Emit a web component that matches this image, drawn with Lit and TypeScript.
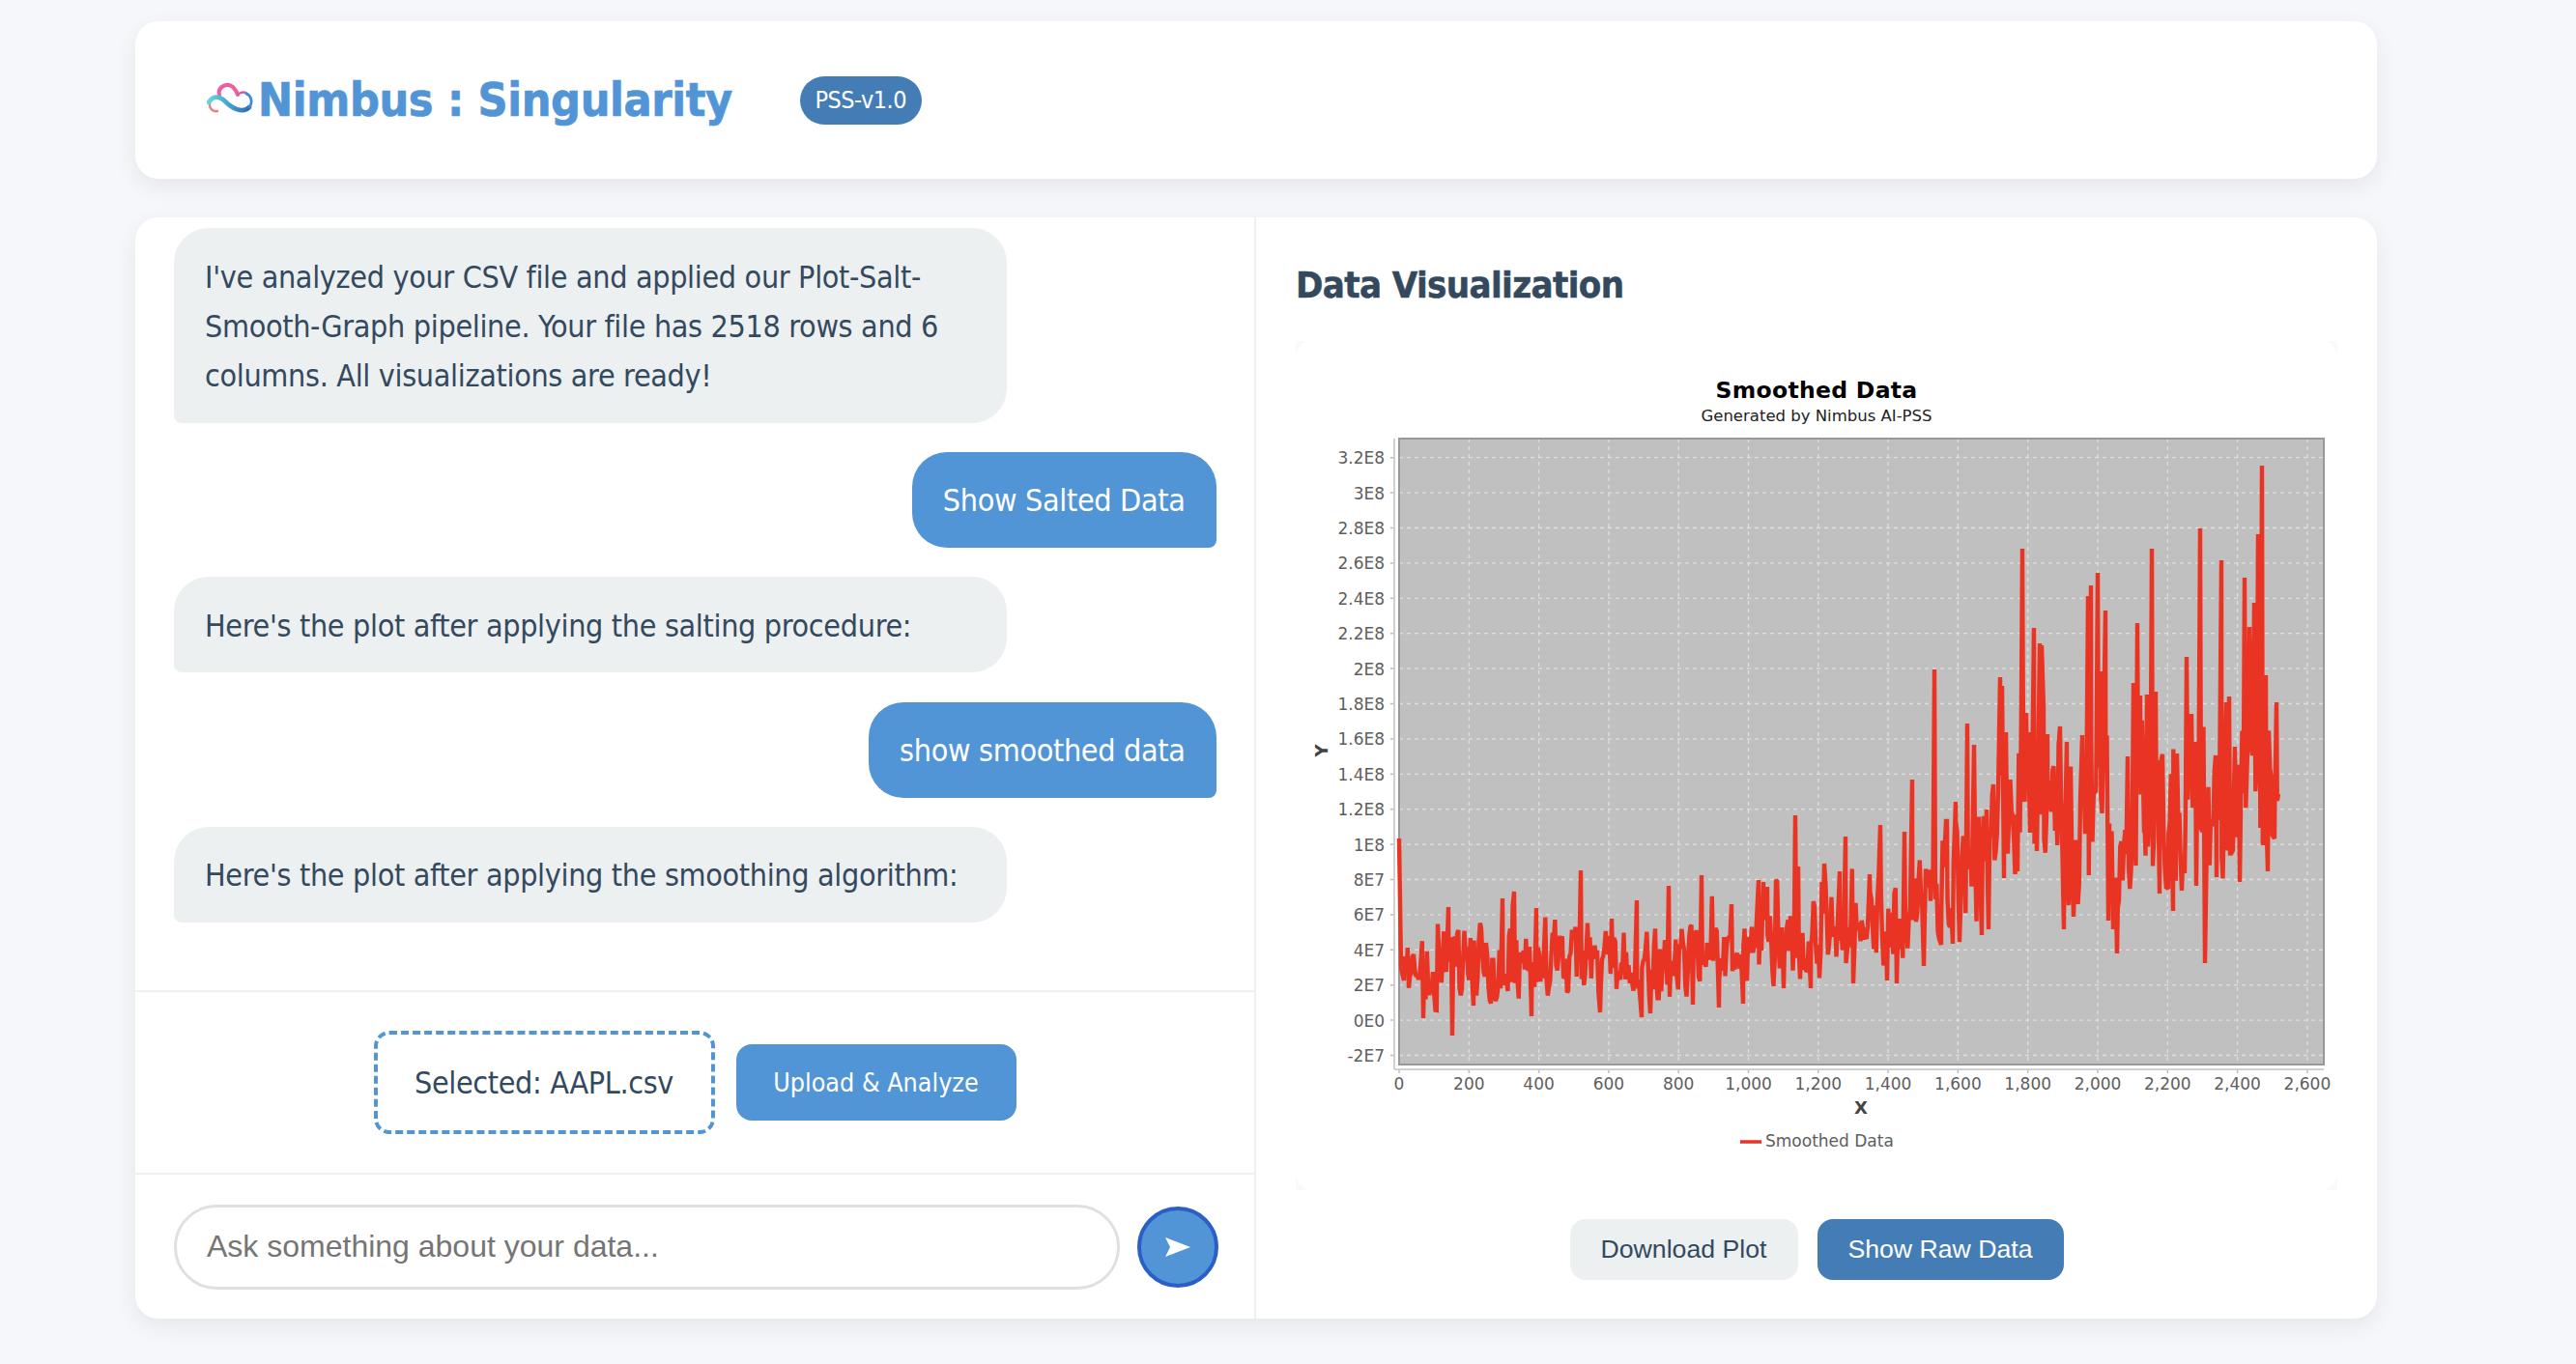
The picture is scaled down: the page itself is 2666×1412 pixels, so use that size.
import { html, svg, css, LitElement } from "lit";
import { customElement } from "lit/decorators.js";

type Pt = [number, number];

// chart coordinates are page pixels, the group is shifted by the frame origin
const PLOT = { left: 1448, top: 454, right: 2405, bottom: 1102 };
const yOf = (step: number) => 473.7 + step * 36.4;
const xOf = (v: number) => 1448 + v * 0.3615;

const Y_LABELS = ["3.2E8", "3E8", "2.8E8", "2.6E8", "2.4E8", "2.2E8", "2E8", "1.8E8", "1.6E8", "1.4E8", "1.2E8", "1E8", "8E7", "6E7", "4E7", "2E7", "0E0", "-2E7"];
const X_VALUES = [0, 200, 400, 600, 800, 1000, 1200, 1400, 1600, 1800, 2000, 2200, 2400, 2600];

const ANCHORS: Pt[] = [
  [1448, 868], [1450, 1000], [1473, 1054], [1499, 939], [1503, 1072], [1525, 1041], [1555, 930], [1567, 923], [1585, 1052], [1590, 940],
  [1636, 901], [1656, 1048], [1668, 951], [1694, 932], [1699, 1053], [1708, 1049], [1727, 917], [1752, 1040], [1761, 906], [1779, 1043],
  [1792, 936], [1804, 1039], [1820, 911], [1825, 913], [1829, 918], [1846, 1023], [1858, 844], [1861, 897], [1874, 1023], [1888, 894],
  [1904, 902], [1910, 866], [1918, 1018], [1935, 905], [1946, 854], [1953, 1015], [1963, 1018], [1971, 861], [1979, 807], [1991, 1000],
  [2002, 693], [2009, 978], [2014, 850], [2015, 850], [2021, 977], [2024, 830], [2036, 749], [2043, 771], [2051, 968], [2056, 838],
  [2058, 962], [2070, 701], [2072, 710], [2074, 909], [2076, 758], [2088, 902], [2093, 568], [2097, 738], [2101, 862], [2105, 650],
  [2108, 881], [2111, 666], [2113, 668], [2115, 733], [2118, 845], [2119, 760], [2132, 752], [2136, 962], [2139, 768], [2141, 937],
  [2146, 949], [2155, 761], [2161, 617], [2164, 606], [2169, 819], [2171, 593], [2174, 695], [2179, 632], [2182, 953], [2187, 962],
  [2191, 987], [2202, 783], [2203, 898], [2208, 707], [2212, 645], [2215, 720], [2219, 862], [2222, 719], [2225, 833], [2227, 568],
  [2231, 716], [2235, 925], [2244, 920], [2249, 943], [2253, 780], [2261, 904], [2263, 680], [2268, 739], [2272, 768], [2273, 917],
  [2277, 547], [2282, 997], [2293, 782], [2294, 908], [2299, 580], [2304, 727], [2307, 721], [2311, 880], [2313, 773], [2318, 913],
  [2323, 598], [2326, 778], [2328, 649], [2331, 782], [2333, 624], [2337, 553], [2339, 723], [2341, 482], [2345, 699], [2347, 902],
  [2354, 868], [2356, 727], [2358, 822],
];

// x, top of the dense band, bottom of the dense band
const BAND: [number, number, number][] = [
  [1448, 975, 1030], [1500, 970, 1035], [1570, 960, 1025], [1640, 975, 1030], [1700, 975, 1030], [1760, 965, 1025], [1800, 960, 1020],
  [1850, 945, 1010], [1900, 935, 1005], [1960, 915, 990], [2000, 890, 970], [2040, 850, 960], [2060, 830, 930], [2090, 780, 880],
  [2125, 780, 860], [2150, 810, 930], [2175, 760, 900], [2195, 870, 970], [2215, 760, 860], [2240, 800, 915], [2265, 780, 900],
  [2285, 790, 930], [2305, 800, 880], [2330, 730, 840], [2358, 760, 880],
];

function bandAt(x: number): [number, number] {
  for (let i = 1; i < BAND.length; i++) {
    if (x <= BAND[i][0]) {
      const a = BAND[i - 1];
      const b = BAND[i];
      const t = (x - a[0]) / (b[0] - a[0]);
      return [a[1] + (b[1] - a[1]) * t, a[2] + (b[2] - a[2]) * t];
    }
  }
  return [760, 880];
}

function buildSeries(): string {
  let seed = 20240611;
  const rand = () => {
    seed = (seed * 1664525 + 1013904223) >>> 0;
    return seed / 4294967296;
  };
  const pts: Pt[] = [];
  let a = 0;
  let walk = 0;
  const step = 1.25;
  for (let x = 1448; x < 2358; x += step) {
    const hits: Pt[] = [];
    while (a < ANCHORS.length && ANCHORS[a][0] < x + step) hits.push(ANCHORS[a++]);
    if (hits.length) {
      pts.push(...hits);
    } else {
      const [top, bottom] = bandAt(x);
      // mean reverting walk, so the line swings instead of filling the band solid
      walk = 0.35 * walk + (rand() - 0.5) * 1.9;
      let y = (top + bottom) / 2 + ((bottom - top) / 2) * walk * 1.2;
      if (rand() < 0.04) y = top - rand() * 38;
      pts.push([x, Math.min(y, bottom + 18)]);
    }
  }
  while (a < ANCHORS.length) pts.push(ANCHORS[a++]);
  return pts.map((p) => `${p[0].toFixed(1)},${p[1].toFixed(1)}`).join(" ");
}

const SERIES = buildSeries();

const MESSAGES = [
  { from: "bot", text: "I've analyzed your CSV file and applied our Plot-Salt-Smooth-Graph pipeline. Your file has 2518 rows and 6 columns. All visualizations are ready!" },
  { from: "user", text: "Show Salted Data" },
  { from: "bot", text: "Here's the plot after applying the salting procedure:" },
  { from: "user", text: "show smoothed data" },
  { from: "bot", text: "Here's the plot after applying the smoothing algorithm:" },
];

@customElement("app-root")
export class AppRoot extends LitElement {
  static styles = css`
    :host {
      display: block;
      min-height: 1412px;
      background: #f5f7fa;
      font-family: "DejaVu Sans Condensed", "DejaVu Sans", sans-serif;
      font-stretch: condensed;
      color: #34495e;
    }

    .page {
      width: 2320px;
      margin-left: 140px;
      padding: 22px 0 47px;
      display: flex;
      flex-direction: column;
      gap: 40px;
    }

    .card {
      background: #fff;
      border-radius: 24px;
      box-shadow: 0 8px 24px rgba(0, 0, 0, 0.07);
    }

    .header {
      height: 163px;
      display: flex;
      align-items: center;
      padding-left: 74px;
      box-sizing: border-box;
    }

    .logo {
      width: 52px;
      height: 38px;
      flex: none;
    }

    h1 {
      margin: 0 70px 0 1px;
      font-size: 48px;
      font-weight: 700;
      color: #5295d6;
      line-height: 1.2;
      letter-spacing: -0.35px;
      -webkit-text-stroke: 0.7px #5295d6;
    }

    .badge {
      width: 126px;
      height: 50px;
      border-radius: 25px;
      background: #447db5;
      color: #fff;
      font-size: 25px;
      letter-spacing: -0.5px;
      display: flex;
      align-items: center;
      justify-content: center;
    }

    .main {
      height: 1140px;
      display: grid;
      grid-template-columns: 1160px 1160px;
      overflow: hidden;
    }

    .left {
      display: flex;
      flex-direction: column;
      border-right: 2px solid #f0f0f0;
      min-height: 0;
    }

    .messages {
      flex: 1;
      min-height: 0;
      overflow: hidden;
      padding: 11px 39.5px 0 40px;
      display: flex;
      flex-direction: column;
      gap: 30.2px;
    }

    .bubble {
      box-sizing: border-box;
      padding: 25.5px 32px 22.5px;
      font-size: 32px;
      line-height: 51.2px;
      letter-spacing: -0.33px;
      flex: none;
    }

    .bubble.bot {
      width: 862px;
      background: #ecf0f1;
      border-radius: 36px 36px 36px 8px;
    }

    .bubble.user {
      align-self: flex-end;
      background: #5295d6;
      color: #fff;
      border-radius: 36px 36px 8px 36px;
    }

    .upload {
      height: 187px;
      border-top: 2px solid #f0f0f0;
      border-bottom: 2px solid #f0f0f0;
      display: flex;
      align-items: center;
      justify-content: center;
      gap: 22px;
    }

    .file {
      box-sizing: border-box;
      width: 353px;
      height: 107px;
      border: 4px dashed #5295d6;
      border-radius: 16px;
      font-size: 32px;
      letter-spacing: -0.35px;
      display: flex;
      align-items: center;
      justify-content: center;
    }

    .upload-btn {
      width: 290px;
      height: 79px;
      border: none;
      border-radius: 16px;
      background: #5295d6;
      color: #fff;
      font: inherit;
      font-size: 26.67px;
    }

    .ask {
      flex: none;
      height: 149px;
      box-sizing: border-box;
      padding: 0 37px 0 40px;
      display: flex;
      align-items: center;
      gap: 18px;
    }

    .ask input {
      flex: 1;
      min-width: 0;
      height: 88px;
      box-sizing: border-box;
      border: 3px solid #e0e0e0;
      border-radius: 44px;
      padding: 0 31px;
      font-family: "Liberation Sans", Arial, sans-serif;
      font-size: 32px;
      outline: none;
    }

    .ask input::placeholder {
      color: #757575;
    }

    .send {
      flex: none;
      width: 84px;
      height: 84px;
      box-sizing: border-box;
      border: 4px solid #2a5fc8;
      border-radius: 50%;
      background: #5295d6;
      padding: 0;
      display: flex;
      align-items: center;
      justify-content: center;
    }

    .right {
      box-sizing: border-box;
      padding: 0 41px;
      display: flex;
      flex-direction: column;
    }

    h2 {
      margin: 0;
      height: 128px;
      display: flex;
      align-items: flex-end;
      padding-bottom: 34px;
      box-sizing: border-box;
      font-size: 38px;
      font-weight: 700;
      line-height: 48px;
      letter-spacing: -0.6px;
      -webkit-text-stroke: 0.5px #34495e;
    }

    .frame {
      width: 1078px;
      height: 879px;
      background: #f8f9f9;
    }

    .chart {
      display: block;
      width: 1078px;
      height: 879px;
      background: #fff;
      border-radius: 16px;
    }

    .chart text {
      font-family: "DejaVu Sans", sans-serif;
      font-stretch: normal;
    }

    .actions {
      margin-top: 30px;
      display: flex;
      justify-content: center;
      gap: 20px;
    }

    .actions button {
      height: 63px;
      border: none;
      border-radius: 16px;
      font-family: "Liberation Sans", Arial, sans-serif;
      font-size: 26.67px;
    }

    .download {
      width: 236px;
      background: #ecf0f1;
      color: #34495e;
    }

    .raw {
      width: 255px;
      background: #447db5;
      color: #fff;
    }
  `;

  private renderLogo() {
    return html`
      <svg class="logo" viewBox="0 0 52 38" fill="none" aria-hidden="true">
        <defs>
          <linearGradient id="ribbon" x1="0" y1="0" x2="1" y2="0">
            <stop offset="0" stop-color="#66d6d8" />
            <stop offset="0.55" stop-color="#3f9fcf" />
            <stop offset="1" stop-color="#2f68b4" />
          </linearGradient>
        </defs>
        <path d="M13 13C11 5 21 0 27 5C30 8 31 10 32 13" stroke="#ee5f9b" stroke-width="4" stroke-linecap="round" />
        <path d="M32 13C35 10 39 10 42 12" stroke="#d0629f" stroke-width="2.4" stroke-linecap="round" />
        <path d="M3 21C2 27 6 31 11 30" stroke="#f27a8c" stroke-width="2.4" stroke-linecap="round" />
        <path d="M2 21C6 14 13 14 19 20C26 27 37 33 44 26" stroke="url(#ribbon)" stroke-width="4.6" stroke-linecap="round" />
        <path d="M44 26C48 21 46 14 41 12" stroke="#3f8ed0" stroke-width="2.8" stroke-linecap="round" />
      </svg>
    `;
  }

  private renderChart() {
    const grid = "#dedede";
    const label = "#5e5e5e";
    return svg`
      <g transform="translate(-1341 -353)">
        <text x="1880" y="411.5" text-anchor="middle" font-size="23.5" font-weight="700" letter-spacing="0.3" fill="#000">Smoothed Data</text>
        <text x="1880" y="436" text-anchor="middle" font-size="16.5" fill="#222">Generated by Nimbus AI-PSS</text>

        <rect x=${PLOT.left} y=${PLOT.top} width=${PLOT.right - PLOT.left} height=${PLOT.bottom - PLOT.top} fill="#c0c0c0" />
        ${Y_LABELS.map((l, i) => svg`
          <line x1=${PLOT.left} x2=${PLOT.right} y1=${yOf(i)} y2=${yOf(i)} stroke=${grid} stroke-width="1.3" stroke-dasharray="4 4" />
          <line x1="1439" x2="1443" y1=${yOf(i)} y2=${yOf(i)} stroke="#bbb" stroke-width="1.5" />
          <text x="1433" y=${yOf(i) + 6.5} text-anchor="end" font-size="17" fill=${label}>${l}</text>
        `)}
        ${X_VALUES.map((v) => svg`
          <line x1=${xOf(v)} x2=${xOf(v)} y1=${PLOT.top} y2=${PLOT.bottom} stroke=${grid} stroke-width="1.3" stroke-dasharray="4 4" />
          <line x1=${xOf(v)} x2=${xOf(v)} y1="1107" y2="1111" stroke="#bbb" stroke-width="1.5" />
          <text x=${xOf(v)} y="1128" text-anchor="middle" font-size="17" fill=${label}>${v.toLocaleString("en-US")}</text>
        `)}
        <rect x=${PLOT.left} y=${PLOT.top} width=${PLOT.right - PLOT.left} height=${PLOT.bottom - PLOT.top} fill="none" stroke="#999" stroke-width="2" />
        <line x1="1443" x2="1443" y1="454" y2="1107" stroke="#d0d0d0" stroke-width="2" />
        <line x1="1443" x2="2405" y1="1107" y2="1107" stroke="#d0d0d0" stroke-width="2" />

        <polyline points=${SERIES} fill="none" stroke="#ea3423" stroke-width="4.4" stroke-linejoin="miter" stroke-miterlimit="2" />

        <text x="1926" y="1153" text-anchor="middle" font-size="18" font-weight="700" fill="#444">X</text>
        <text transform="translate(1374 777) rotate(-90)" text-anchor="middle" font-size="18" font-weight="700" fill="#444">Y</text>

        <line x1="1801" x2="1823" y1="1182" y2="1182" stroke="#ea3423" stroke-width="3.5" />
        <text x="1827" y="1187" font-size="17" fill=${label}>Smoothed Data</text>
      </g>
    `;
  }

  override render() {
    return html`
      <div class="page">
        <header class="card header">
          ${this.renderLogo()}
          <h1>Nimbus : Singularity</h1>
          <span class="badge">PSS-v1.0</span>
        </header>

        <main class="card main">
          <section class="left">
            <div class="messages">
              ${MESSAGES.map((m) => html`<div class="bubble ${m.from}">${m.text}</div>`)}
            </div>
            <div class="upload">
              <div class="file">Selected: AAPL.csv</div>
              <button class="upload-btn">Upload &amp; Analyze</button>
            </div>
            <div class="ask">
              <input type="text" placeholder="Ask something about your data..." />
              <button class="send" aria-label="Send">
                <svg width="26" height="20" viewBox="0 0 26 20"><path d="M0 0L26 10L0 20L5 10Z" fill="#fff" /></svg>
              </button>
            </div>
          </section>

          <section class="right">
            <h2>Data Visualization</h2>
            <div class="frame">
              <svg class="chart" viewBox="0 0 1078 879">${this.renderChart()}</svg>
            </div>
            <div class="actions">
              <button class="download">Download Plot</button>
              <button class="raw">Show Raw Data</button>
            </div>
          </section>
        </main>
      </div>
    `;
  }
}
